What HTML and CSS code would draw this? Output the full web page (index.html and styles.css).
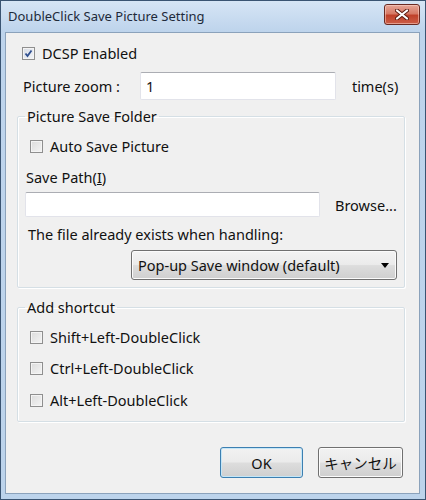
FILE: index.html
```html
<!DOCTYPE html>
<html>
<head>
<meta charset="utf-8">
<link rel="stylesheet" href="styles.css">
</head>
<body>
<div class="window">
  <div class="titlebar">
    <span class="title">DoubleClick Save Picture Setting</span>
    <span class="close"><svg width="14" height="11" viewBox="0 0 14 11"><path d="M2 1.5 L12 9.5 M12 1.5 L2 9.5" stroke="#5a1a10" stroke-width="4" stroke-linecap="round"/><path d="M2 1.5 L12 9.5 M12 1.5 L2 9.5" stroke="#ffffff" stroke-width="2.2" stroke-linecap="round"/></svg></span>
  </div>
  <div class="client">
    <div class="row dcsp">
      <span class="cb checked"><svg width="9" height="9" viewBox="0 0 9 9"><path d="M1.5 4.5 L3.5 7 L7.5 1.5" stroke="#2f4f8f" stroke-width="1.8" fill="none"/></svg></span>
      <span class="label">DCSP Enabled</span>
    </div>
    <div class="row zoom">
      <span class="zoom-label">Picture zoom :</span>
      <span class="input zoom-input">1</span>
      <span class="unit">time(s)</span>
    </div>
    <fieldset class="group g1">
      <legend>Picture Save Folder</legend>
      <div class="row cbrow first">
        <span class="cb"></span>
        <span class="label">Auto Save Picture</span>
      </div>
      <div class="row path-label">Save Path(<u>I</u>)</div>
      <div class="row path">
        <span class="input path-input"></span>
        <span class="browse">Browse...</span>
      </div>
      <div class="row exists">The file already exists when handling:</div>
      <div class="row selrow">
        <span class="select">Pop-up Save window (default)<svg class="arrow" width="8" height="5" viewBox="0 0 8 5"><path d="M0 0 H8 L4 5 Z" fill="#000"/></svg></span>
      </div>
    </fieldset>
    <fieldset class="group g2">
      <legend>Add shortcut</legend>
      <div class="row cbrow first">
        <span class="cb"></span>
        <span class="label">Shift+Left-DoubleClick</span>
      </div>
      <div class="row cbrow r2">
        <span class="cb"></span>
        <span class="label">Ctrl+Left-DoubleClick</span>
      </div>
      <div class="row cbrow r3">
        <span class="cb"></span>
        <span class="label">Alt+Left-DoubleClick</span>
      </div>
    </fieldset>
    <div class="buttons">
      <span class="btn ok">OK</span>
      <span class="btn cancel">キャンセル</span>
    </div>
  </div>
</div>
</body>
</html>
```

FILE: styles.css
```css
* { box-sizing: border-box; }
html, body { margin: 0; padding: 0; }
body {
  width: 426px;
  height: 500px;
  font-family: "Noto Sans", "Noto Sans CJK JP", sans-serif;
  font-size: 14.5px;
  color: #111;
  overflow: hidden;
}
.window {
  width: 426px;
  height: 500px;
  border: 1px solid #3a5472;
  background: linear-gradient(to bottom, #d6e5f5 0px, #bed4ec 30px, #bcd3eb 100%);
  display: flex;
  flex-direction: column;
}
.titlebar {
  height: 31px;
  display: flex;
  align-items: flex-start;
  justify-content: space-between;
  padding: 0 5px 0 7px;
}
.title {
  font-size: 13px;
  color: #1e2a3a;
  line-height: 20px;
  margin-top: 5px;
}
.close {
  width: 36px;
  height: 21px;
  margin-top: 3px;
  border: 1px solid #6a2a22;
  border-radius: 3px;
  background: linear-gradient(to bottom, #e6a596 0%, #d77a66 45%, #c0412a 55%, #cc5e48 100%);
  box-shadow: inset 0 0 0 1px rgba(255, 220, 210, 0.5);
  display: flex;
  align-items: center;
  justify-content: center;
}
.client {
  flex: 1;
  margin: 0 5px 5px 4px;
  background: #f0f0f0;
  border: 1px solid #8ba2bb;
  display: flex;
  flex-direction: column;
}
.row {
  display: flex;
  align-items: center;
  height: 20px;
  line-height: 20px;
  white-space: nowrap;
}
.cb {
  width: 13px;
  height: 13px;
  border: 1px solid #8f8f8f;
  background: linear-gradient(135deg, #dcdcdc 0%, #f4f4f4 100%);
  box-shadow: inset 0 0 0 1px #f4f4f4;
  display: flex;
  align-items: center;
  justify-content: center;
  flex: none;
}
.cb.checked {
  background: linear-gradient(135deg, #d8dde6 0%, #f2f4f8 100%);
}
.label { margin-left: 7px; }
.dcsp { margin-top: 10px; padding-left: 16px; }
.zoom {
  margin-top: 9px;
  height: 28px;
  padding-left: 17px;
}
.input {
  display: block;
  background: #fff;
  border: 1px solid #e2e3ea;
  border-top-color: #abadb3;
  border-radius: 2px;
}
.zoom-input {
  margin-left: 20px;
  width: 196px;
  height: 28px;
  line-height: 26px;
  padding-left: 5px;
}
.unit { margin-left: 16px; }
.group {
  margin: 0 14px 0 11px;
  border: 1px solid #d5dfe5;
  border-radius: 2px;
  box-shadow: inset 1px 1px 0 #fff, 1px 1px 0 #fff;
  padding: 0 7px 0 8px;
  min-width: 0;
}
.group legend {
  padding: 0 2px;
  margin-left: -1px;
  line-height: 20px;
  height: 20px;
}
.g1 { margin-top: 6px; padding-bottom: 7px; }
.g2 { margin-top: 9px; padding-bottom: 11px; }
.cbrow { padding-left: 4px; }
.first { margin-top: 10px; }
.path-label { margin-top: 11px; }
.path { margin-top: 5px; height: 25px; }
.path-input { width: 295px; height: 25px; margin-left: -1px; }
.browse { margin-left: 15px; }
.exists { margin-top: 7px; padding-left: 2px; }
.selrow { margin-top: 6px; height: 30px; justify-content: flex-end; }
.select {
  width: 266px;
  height: 30px;
  border: 1px solid #707070;
  border-radius: 3px;
  background: linear-gradient(to bottom, #f3f3f3 0%, #ebebeb 48%, #dddddd 52%, #cfcfcf 100%);
  box-shadow: inset 0 0 0 1px #fbfbfb;
  display: flex;
  align-items: center;
  justify-content: space-between;
  padding: 0 7px 0 6px;
}
.arrow { flex: none; }
.r2 { margin-top: 11px; }
.r3 { margin-top: 12px; }
.buttons {
  display: flex;
  justify-content: flex-end;
  gap: 15px;
  margin-top: 25px;
  padding-right: 16px;
}
.btn {
  height: 31px;
  display: flex;
  align-items: center;
  justify-content: center;
  border: 1px solid #707070;
  border-radius: 3px;
  background: linear-gradient(to bottom, #f2f2f2 0%, #ebebeb 48%, #dddddd 52%, #cfcfcf 100%);
  box-shadow: inset 0 0 0 1px #fcfcfc;
}
.ok {
  width: 83px;
  border-color: #3c7fb1;
  box-shadow: inset 0 0 0 1px #c4e6f7;
}
.cancel { width: 85px; }
```
